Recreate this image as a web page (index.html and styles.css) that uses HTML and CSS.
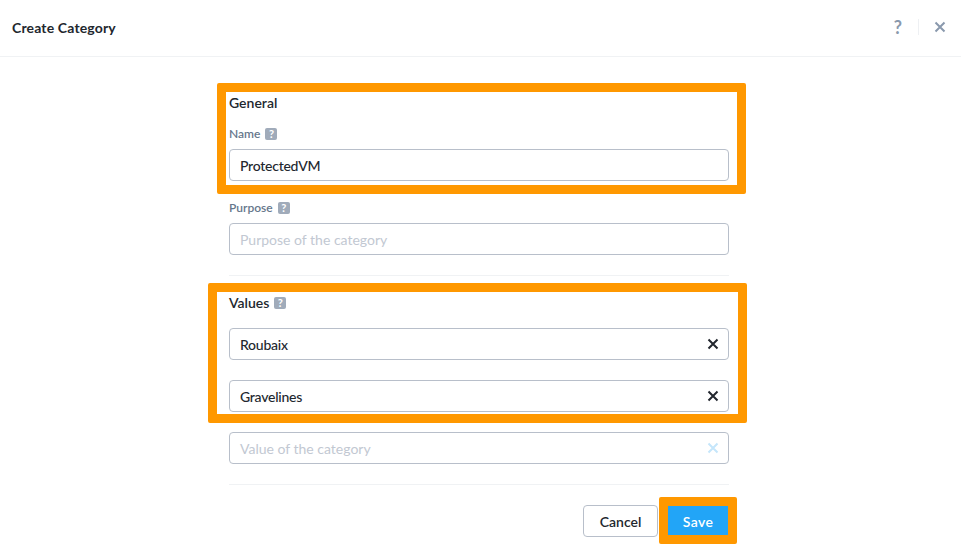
FILE: index.html
```html
<!DOCTYPE html>
<html lang="en">
<head>
<meta charset="utf-8">
<title>Create Category</title>
<link rel="stylesheet" href="styles.css">
</head>
<body>
<header class="header">
  <h1 class="title">Create Category</h1>
  <div class="header-actions">
    <span class="help-link">?</span>
    <span class="sep"></span>
    <svg class="close" width="12" height="12" viewBox="0 0 12 12"><path d="M1.5 1.5l9 9M10.5 1.5l-9 9"/></svg>
  </div>
</header>
<main class="form">
  <section class="section general">
    <h2 class="section-title">General</h2>
    <div class="label name-label">Name <span class="tip">?</span></div>
    <div class="input"><span class="value">ProtectedVM</span></div>
    <div class="label purpose-label">Purpose <span class="tip">?</span></div>
    <div class="input"><span class="placeholder">Purpose of the category</span></div>
  </section>
  <section class="section values">
    <h2 class="section-title">Values <span class="tip">?</span></h2>
    <div class="input first"><span class="value">Roubaix</span>
      <svg class="clear" width="12" height="12" viewBox="0 0 12 12"><path d="M1.5 1.5l9 9M10.5 1.5l-9 9"/></svg></div>
    <div class="input"><span class="value">Gravelines</span>
      <svg class="clear" width="12" height="12" viewBox="0 0 12 12"><path d="M1.5 1.5l9 9M10.5 1.5l-9 9"/></svg></div>
    <div class="input"><span class="placeholder">Value of the category</span>
      <svg class="clear faint" width="12" height="12" viewBox="0 0 12 12"><path d="M1.5 1.5l9 9M10.5 1.5l-9 9"/></svg></div>
  </section>
  <footer class="actions">
    <button class="btn cancel" type="button">Cancel</button>
    <button class="btn save" type="button">Save</button>
  </footer>
</main>
<div class="mark mark-general"></div>
<div class="mark mark-values"></div>
<div class="mark mark-save"></div>
</body>
</html>
```
FILE: styles.css
```css
* { box-sizing: border-box; }
html, body { height: 100%; }
body {
  margin: 0;
  background: #fff;
  color: #22272e;
  font-family: Lato, "Liberation Sans", sans-serif;
  font-size: 14px;
  overflow: hidden;
  position: relative;
}
.header {
  height: 57px;
  border-bottom: 1px solid #f0f2f4;
  display: flex;
  align-items: center;
  justify-content: space-between;
  padding: 0 15px 2px 12px;
}
.title { margin: 0; font-size: 14px; font-weight: 700; letter-spacing: 0.15px; color: #22272e; }
.header-actions { display: flex; align-items: center; }
.help-link { font-size: 18px; font-weight: 700; color: #8a99ad; line-height: 18px; }
.sep { width: 1px; height: 16px; background: #eef0f3; margin: 0 15px 0 16px; }
.close { fill: none; stroke: #8a99ad; stroke-width: 2; }
.form { width: 500px; margin-left: 229px; }
.section { border-bottom: 1px solid #f0f2f4; }
.general { padding: 37px 0 20px; }
.values { padding: 18px 0 20px; }
.section-title { margin: 0; font-size: 14px; line-height: 17px; font-weight: 600; color: #22272e; display: flex; align-items: center; gap: 5px; }
.label { display: flex; align-items: center; gap: 5px; font-size: 12px; line-height: 14px; font-weight: 600; color: #66778c; margin-bottom: 8px; }
.name-label { margin-top: 16px; }
.purpose-label { margin-top: 20px; }
.tip {
  display: inline-block;
  width: 12px; height: 12px;
  border-radius: 2px;
  background: #a0abba;
  color: #fff;
  font-size: 11px; line-height: 12px;
  font-weight: 700;
  text-align: center;
}
.input {
  height: 32px;
  border: 1px solid #b8bfca;
  border-radius: 4px;
  padding: 0 9px 0 10px;
  display: flex;
  align-items: center;
  justify-content: space-between;
  font-size: 14px;
  margin-top: 20px;
}
.label + .input { margin-top: 0; }
.first { margin-top: 17px; }
.value { color: #22272e; font-weight: 500; letter-spacing: -0.25px; }
.placeholder { color: #c2c8d2; }
.clear { fill: none; stroke: #22272e; stroke-width: 2; }
.faint { stroke: #c5e6fb; }
.actions { display: flex; justify-content: flex-end; align-items: center; gap: 10px; padding: 20px 1px 0 0; }
.btn { font-family: inherit; font-size: 14px; font-weight: 600; border-radius: 4px; padding: 0; }
.cancel { width: 75px; height: 32px; background: #fff; border: 1px solid #b8bfca; color: #22272e; }
.save { width: 60px; height: 32px; background: #22a5f7; border: 0; color: #fff; border-radius: 0; letter-spacing: 0.4px; }
.mark { position: absolute; border: 9px solid #ff9800; border-radius: 2px; pointer-events: none; }
.mark-general { left: 217px; top: 83px; width: 529px; height: 111px; }
.mark-values { left: 208px; top: 283px; width: 539px; height: 140px; }
.mark-save { left: 659px; top: 497px; width: 78px; height: 47px; }
```
